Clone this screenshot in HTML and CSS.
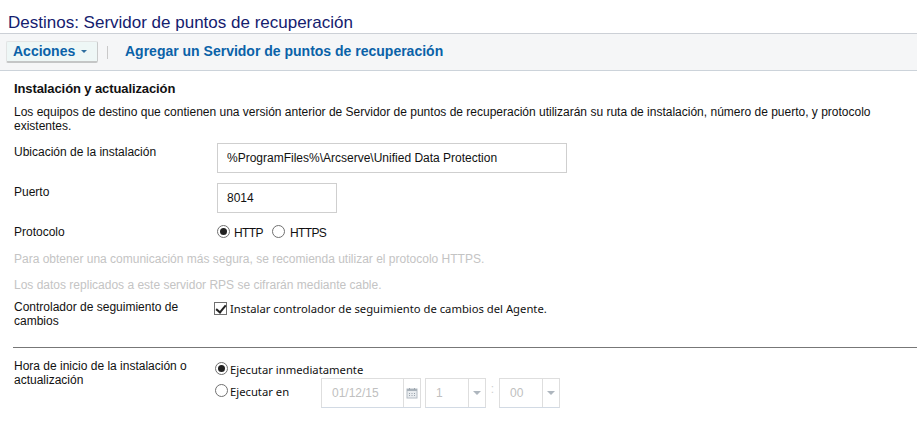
FILE: index.html
```html
<!DOCTYPE html>
<html lang="es">

<head>
    <meta charset="UTF-8">
    <title>Destinos: Servidor de puntos de recuperación</title>
    <link rel="stylesheet" href="styles.css">
</head>

<body>
    <h1 class="page-title">Destinos: Servidor de puntos de recuperación</h1>

    <!-- barra de acciones -->
    <div class="toolbar">
        <a href="#" class="btn-actions">Acciones <span class="caret"></span></a>
        <span class="toolbar-sep"></span>
        <a href="#" class="toolbar-link">Agregar un Servidor de puntos de recuperación</a>
    </div>

    <div class="content">
        <h2 class="section-title">Instalación y actualización</h2>
        <p class="section-desc">Los equipos de destino que contienen una versión anterior de Servidor de puntos de recuperación utilizarán su ruta de instalación, número de puerto, y protocolo existentes.</p>

        <div class="row row-path">
            <label class="row-label">Ubicación de la instalación</label>
            <input class="text-input path-input" type="text" value="%ProgramFiles%\Arcserve\Unified Data Protection">
        </div>

        <div class="row row-port">
            <label class="row-label">Puerto</label>
            <input class="text-input port-input" type="text" value="8014">
        </div>

        <div class="row row-protocol">
            <label class="row-label">Protocolo</label>
            <div class="radio-line">
                <input class="radio" type="radio" name="protocol" checked>
                <span class="radio-text">HTTP</span>
                <input class="radio radio-second" type="radio" name="protocol">
                <span class="radio-text">HTTPS</span>
            </div>
        </div>

        <p class="note note-first">Para obtener una comunicación más segura, se recomienda utilizar el protocolo HTTPS.</p>
        <p class="note note-second">Los datos replicados a este servidor RPS se cifrarán mediante cable.</p>

        <div class="row row-driver">
            <label class="row-label">Controlador de seguimiento de cambios</label>
            <div class="check-line">
                <input class="check" type="checkbox" checked>
                <span class="option-text">Instalar controlador de seguimiento de cambios del Agente.</span>
            </div>
        </div>
    </div>

    <hr class="divider">

    <div class="content">
        <div class="row row-start">
            <label class="row-label">Hora de inicio de la instalación o actualización</label>
            <div class="start-options">
                <div class="start-now">
                    <input class="radio" type="radio" name="start" checked>
                    <span class="option-text">Ejecutar inmediatamente</span>
                </div>
                <div class="start-at">
                    <input class="radio" type="radio" name="start">
                    <span class="option-text start-at-text">Ejecutar en</span>
                    <div class="combo combo-date">
                        <span class="combo-value">01/12/15</span>
                        <span class="combo-btn">
                            <svg width="12" height="12" viewBox="0 0 12 12">
                                <rect x="1" y="2" width="10" height="9" fill="#e9ecef" stroke="#b4bcc4"/>
                                <rect x="1" y="2" width="10" height="2" fill="#a9b2ba"/>
                                <path d="M3.500 1v2M8.500 1v2" stroke="#a0a8b0"/>
                                <path d="M3 6.500h1M5.500 6.500h1M8 6.500h1M3 8.500h1M5.500 8.500h1M8 8.500h1" stroke="#98a2ac"/>
                            </svg>
                        </span>
                    </div>
                    <div class="combo combo-time">
                        <span class="combo-value">1</span>
                        <span class="combo-btn"><span class="combo-arrow"></span></span>
                    </div>
                    <span class="time-sep">:</span>
                    <div class="combo combo-time">
                        <span class="combo-value">00</span>
                        <span class="combo-btn"><span class="combo-arrow"></span></span>
                    </div>
                </div>
            </div>
        </div>
    </div>
</body>

</html>
```

FILE: styles.css
```css
html,
body,
h1,
h2,
p,
hr {
    padding: 0;
    margin: 0;
}

body {
    background-color: #fff;
    color: #111;
    font-family: "Liberation Sans", Arial, sans-serif;
    font-size: 12px;
    line-height: 14px;
    overflow: hidden;
}

a {
    text-decoration: none;
}

.page-title {
    height: 33px;
    padding: 14px 0 0 8px;
    box-sizing: border-box;
    color: #14206e;
    font-size: 17px;
    font-weight: normal;
    line-height: 18px;
}

/* barra de acciones */

.toolbar {
    display: flex;
    align-items: center;
    height: 38px;
    box-sizing: border-box;
    padding-left: 6px;
    background-color: #f5f6f7;
    border-top: 1px solid #ccd0d6;
    border-bottom: 1px solid #ccd3da;
}

.btn-actions {
    display: flex;
    align-items: center;
    width: 92px;
    height: 22px;
    box-sizing: border-box;
    padding: 0 0 2px 6px;
    background-color: #eef7f6;
    border: 1px solid #e2e4e4;
    border-bottom: 2px solid #c4c6c6;
    border-right: 1px solid #c8caca;
    border-radius: 2px;
    color: #0a62a8;
    font-size: 14px;
    font-weight: bold;
}

.caret {
    width: 0;
    height: 0;
    margin: 2px 0 0 6px;
    border-left: 3px solid transparent;
    border-right: 3px solid transparent;
    border-top: 3px solid #2f6f9f;
}

.toolbar-sep {
    width: 1px;
    height: 13px;
    margin-left: 9px;
    background-color: #c9c9c9;
}

.toolbar-link {
    margin: 0 0 2px 17px;
    color: #0a62a8;
    font-size: 14px;
    font-weight: bold;
}

/* contenido */

.content {
    padding-left: 14px;
}

.section-title {
    margin-top: 11px;
    font-size: 13px;
    font-weight: bold;
    line-height: 14px;
    letter-spacing: -.1px;
}

.section-desc {
    margin-top: 9px;
    width: 890px;
}

.row {
    display: flex;
    align-items: flex-start;
}

.row-label {
    flex: none;
    width: 203px;
    box-sizing: border-box;
    padding-right: 30px;
}

.row-path,
.row-port {
    margin-top: 10px;
}

.row-protocol {
    margin-top: 11px;
}

.row-path .row-label,
.row-port .row-label {
    padding-top: 2px;
}

.row-protocol .row-label {
    padding-top: 1px;
}

.text-input {
    display: block;
    height: 30px;
    box-sizing: border-box;
    padding: 0 9px;
    border: 1px solid #cfcfcf;
    color: #111;
    font-family: "Liberation Sans", Arial, sans-serif;
    font-size: 12px;
    outline: none;
}

.path-input {
    width: 350px;
}

.port-input {
    width: 120px;
}

.radio-line {
    display: flex;
    align-items: flex-start;
    height: 17px;
}

.radio {
    appearance: none;
    flex: none;
    position: relative;
    width: 13px;
    height: 13px;
    margin: 0;
    background-color: #fff;
    border: 1px solid #707070;
    border-radius: 50%;
}

.radio:checked::after {
    content: "";
    position: absolute;
    left: 2px;
    top: 2px;
    width: 7px;
    height: 7px;
    border-radius: 50%;
    background-color: #222;
}

.radio-line .radio {
    margin-top: 1px;
}

.radio-text {
    margin: 2px 0 0 4px;
    letter-spacing: -.6px;
}

.radio-line .radio-second {
    margin-left: 9px;
}

.radio-second + .radio-text {
    margin-left: 5px;
}

.note {
    color: #c4c4c4;
}

.note-first {
    margin-top: 11px;
}

.note-second {
    margin-top: 12px;
}

.row-driver {
    margin-top: 8px;
}

.check-line {
    display: flex;
    align-items: flex-start;
    margin-left: -3px;
}

.check {
    appearance: none;
    flex: none;
    position: relative;
    width: 13px;
    height: 13px;
    margin: 2px 3px 0 0;
    background-color: #fff;
    border: 1px solid #707070;
}

.check:checked::after {
    content: "";
    position: absolute;
    left: 3px;
    top: 0;
    width: 4px;
    height: 8px;
    border: solid #222;
    border-width: 0 2px 2px 0;
    transform: rotate(40deg);
}

.option-text {
    margin-top: 1px;
    font-family: "Noto Sans", sans-serif;
    font-size: 11.25px;
    line-height: 16px;
}

.divider {
    height: 1px;
    margin: 19px 0 0 13px;
    border: 0;
    background-color: #777;
}

/* hora de inicio */

.row-start {
    margin-top: 11px;
}

.start-options {
    margin-left: -2px;
}

.start-now,
.start-at {
    display: flex;
    align-items: flex-start;
}

.start-now .radio,
.start-now .option-text {
    margin-top: 3px;
}

.start-at .radio,
.start-at .option-text {
    margin-top: 6px;
}

.start-now .option-text,
.start-at-text {
    margin-left: 2px;
}

.start-at-text {
    width: 91px;
    flex: none;
}

.combo {
    display: flex;
    flex: none;
    height: 30px;
    box-sizing: border-box;
    border: 1px solid #dedede;
    border-bottom-color: #d2dae4;
    color: #c0c0c0;
}

.combo-date {
    width: 100px;
}

.combo-time {
    width: 61px;
    margin-left: 4px;
}

.combo-time + .time-sep + .combo-time {
    margin-left: 0;
}

.combo-value {
    flex: 1;
    padding-left: 10px;
    line-height: 28px;
}

.combo-btn {
    display: flex;
    align-items: center;
    justify-content: center;
    flex: none;
    width: 16px;
    border-left: 1px solid #dedede;
}

.combo-arrow {
    width: 0;
    height: 0;
    border-left: 4px solid transparent;
    border-right: 4px solid transparent;
    border-top: 4px solid #aeb6be;
}

.time-sep {
    flex: none;
    width: 13px;
    margin-top: 4px;
    color: #d0d0d0;
    text-align: center;
}
```
